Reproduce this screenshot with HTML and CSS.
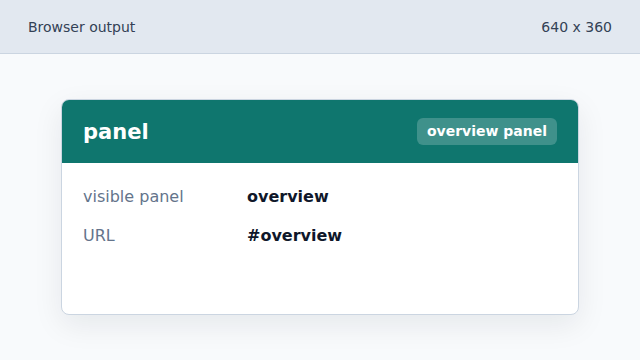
FILE: index.html
```html
<!DOCTYPE html>
<html lang="en">
<head>
    <meta charset="UTF-8">
    <meta name="viewport" content="width=device-width, initial-scale=1.0">
    <title>Browser output</title>
    <link rel="stylesheet" href="styles.css">
</head>
<body>
    <div class="topbar">
        <span>Browser output</span>
        <span>640 x 360</span>
    </div>

    <div class="stage">
        <div class="card">
            <div class="card-header">
                <h1>panel</h1>
                <span class="badge">overview panel</span>
            </div>
            <div class="card-body">
                <div class="label">visible panel</div>
                <div class="value">overview</div>
                <div class="label">URL</div>
                <div class="value">#overview</div>
            </div>
        </div>
    </div>
</body>
</html>
```

FILE: styles.css
```css
html, body {
    height: 100%;
}
body {
    font-family: 'DejaVu Sans', sans-serif;
    margin: 0;
    background-color: #f8fafc;
    display: flex;
    flex-direction: column;
}
.topbar {
    height: 53px;
    flex-shrink: 0;
    display: flex;
    align-items: center;
    justify-content: space-between;
    padding: 0 28px;
    background-color: #e2e8f0;
    border-bottom: 1px solid #cbd5e1;
    font-size: 14px;
    color: #334155;
}
.stage {
    flex: 1;
    display: flex;
    align-items: center;
    justify-content: center;
}
.card {
    width: 518px;
    height: 216px;
    box-sizing: border-box;
    background-color: white;
    border: 1px solid #cbd5e1;
    border-radius: 8px;
    overflow: hidden;
    box-shadow: 0 10px 30px rgba(15, 23, 42, 0.08);
    display: flex;
    flex-direction: column;
}
.card-header {
    height: 63px;
    flex-shrink: 0;
    box-sizing: border-box;
    display: flex;
    align-items: center;
    justify-content: space-between;
    padding: 0 21px;
    background-color: #0f766e;
    color: white;
}
.card-header h1 {
    margin: 0;
    font-size: 21px;
}
.badge {
    padding: 5px 10px;
    border-radius: 6px;
    background-color: rgba(255, 255, 255, 0.2);
    font-size: 14px;
    font-weight: bold;
    line-height: 17px;
}
.card-body {
    display: grid;
    grid-template-columns: 164px 1fr;
    row-gap: 20px;
    padding: 24px 21px;
    font-size: 16px;
    line-height: 19px;
}
.label {
    color: #64748b;
}
.value {
    font-weight: bold;
    color: #0f172a;
}
```
